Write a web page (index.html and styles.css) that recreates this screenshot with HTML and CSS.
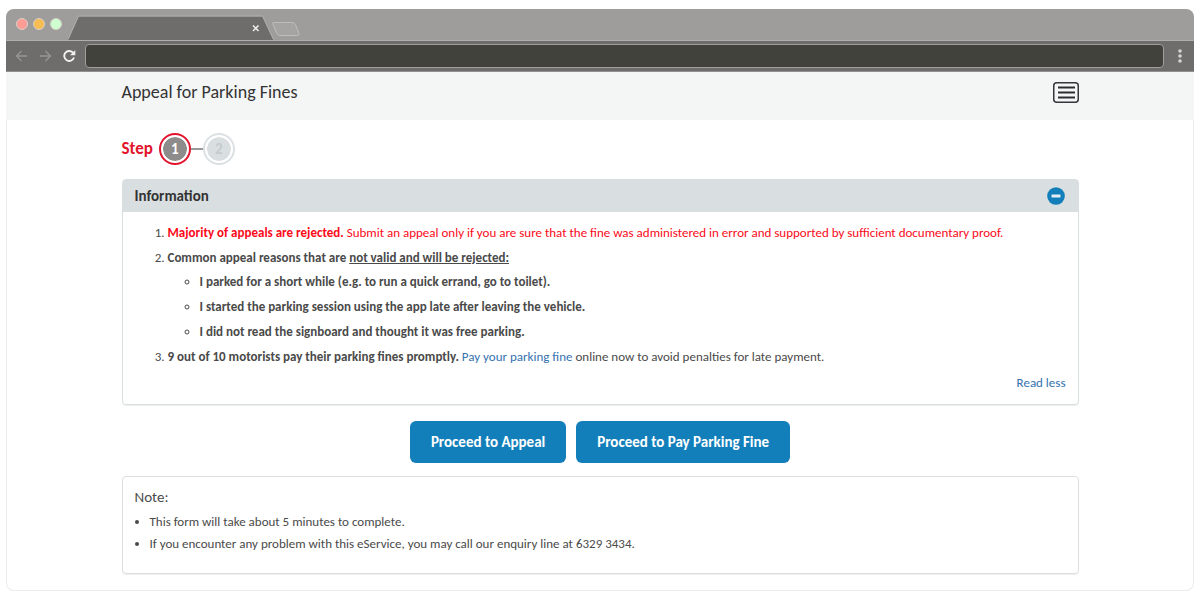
FILE: index.html
```html
<!DOCTYPE html>
<html lang="en">
<head>
<meta charset="utf-8">
<meta name="viewport" content="width=device-width, initial-scale=1">
<title>Appeal for Parking Fines</title>
<link rel="stylesheet" href="styles.css">
</head>
<body>
<div class="window">
  <div class="tabstrip">
    <div class="lights"><span class="light red"></span><span class="light amber"></span><span class="light green"></span></div>
    <svg class="tab" width="240" height="31" viewBox="0 0 240 31" aria-hidden="true">
      <path d="M0 31L10.500 7.500H194.500L205.500 31Z" fill="#6e6d6b"/>
      <path d="M0 30.500L10.500 7H194.500L205.500 30.500" fill="none" stroke="#b0afad"/>
      <path d="M185 16.500l5.500 5.500M190.500 16.500l-5.500 5.500" stroke="#f2f2f2" stroke-width="1.500"/>
      <path d="M205.500 13.500H224q2.500 0 3.500 2l3.500 9q.5 2-1.500 2H212q-2 0-3-2l-4-9q-1-2 .5-2Z" fill="#a5a4a2" stroke="#bebdbb"/>
    </svg>
  </div>
  <div class="toolbar">
    <button class="tool" aria-label="Back"><svg width="13" height="12" viewBox="0 0 13 12"><path d="M12 6H1.500M6.500 1L1.500 6l5 5" fill="none" stroke="#979694" stroke-width="1.300"/></svg></button>
    <button class="tool" aria-label="Forward"><svg width="13" height="12" viewBox="0 0 13 12"><path d="M1 6h10.500M6.500 1l5 5-5 5" fill="none" stroke="#979694" stroke-width="1.300"/></svg></button>
    <button class="tool" aria-label="Reload"><svg width="13" height="12" viewBox="0 0 13 12"><path d="M10.300 3A5 5 0 1 0 11 7.500" fill="none" stroke="#f0f0f0" stroke-width="1.900"/><path d="M12.300 0v5.300H7Z" fill="#f0f0f0"/></svg></button>
    <input class="address" type="text" aria-label="Address">
    <button class="tool" aria-label="Browser menu"><svg width="4" height="14" viewBox="0 0 4 14" fill="#d6d5d3"><circle cx="2" cy="2" r="1.800"/><circle cx="2" cy="7" r="1.800"/><circle cx="2" cy="12" r="1.800"/></svg></button>
  </div>
  <header class="header">
    <div class="container header-row">
      <h1 class="title">Appeal for Parking Fines</h1>
      <button class="menu" aria-label="Menu"><svg width="26" height="21" viewBox="0 0 26 21"><rect x=".75" y=".75" width="24.500" height="19.500" rx="3" fill="none" stroke="#33363a" stroke-width="1.500"/><path d="M5 5.500h17M5 10.500h17M5 15.500h17" stroke="#2b2e31" stroke-width="2.200"/></svg></button>
    </div>
  </header>
  <main class="container">
    <div class="steps">
      <span class="step-label">Step</span>
      <span class="step current">1</span>
      <span class="joint"></span>
      <span class="step">2</span>
    </div>
    <section class="panel">
      <div class="panel-head">
        <h2 class="panel-title">Information</h2>
        <button class="collapse" aria-label="Collapse information"><svg width="18" height="18" viewBox="0 0 18 18"><circle cx="9" cy="9" r="8.800" fill="#137fba"/><rect x="4.500" y="7.500" width="9" height="3" rx=".5" fill="#e4edf1"/></svg></button>
      </div>
      <div class="panel-body">
        <ol class="facts">
          <li class="alert"><strong>Majority of appeals are rejected.</strong> Submit an appeal only if you are sure that the fine was administered in error and supported by sufficient documentary proof.</li>
          <li><strong>Common appeal reasons that are <u>not valid and will be rejected:</u></strong>
            <ul class="reasons">
              <li><strong>I parked for a short while (e.g. to run a quick errand, go to toilet).</strong></li>
              <li><strong>I started the parking session using the app late after leaving the vehicle.</strong></li>
              <li><strong>I did not read the signboard and thought it was free parking.</strong></li>
            </ul>
          </li>
          <li><strong>9 out of 10 motorists pay their parking fines promptly.</strong> <a href="#pay">Pay your parking fine</a> online now to avoid penalties for late payment.</li>
        </ol>
        <a class="less" href="#less">Read less</a>
      </div>
    </section>
    <div class="actions">
      <button class="action">Proceed to Appeal</button>
      <button class="action">Proceed to Pay Parking Fine</button>
    </div>
    <section class="note">
      <h2 class="note-title">Note:</h2>
      <ul class="note-list">
        <li>This form will take about 5 minutes to complete.</li>
        <li>If you encounter any problem with this eService, you may call our enquiry line at 6329 3434.</li>
      </ul>
    </section>
  </main>
</div>
</body>
</html>
```
FILE: styles.css
```css
* { box-sizing: border-box; }
body {
  margin: 0;
  padding: 9px 6px 8px;
  background: #fff;
  color: #4a4a4a;
  font: 13px/24px Carlito, Lato, sans-serif;
}
button { padding: 0; border: 0; background: none; font: inherit; cursor: pointer; }
svg { display: block; }
a { color: #3572b0; text-decoration: none; }
h1, h2, ul, ol { margin: 0; padding: 0; }

.window { border-radius: 8px; box-shadow: inset 0 0 0 1px #ebebeb; overflow: hidden; }
.tabstrip { display: flex; height: 31px; background: #9f9d9b; }
.lights { display: flex; gap: 5px; padding: 9px 0 0 10px; }
.light { width: 12px; height: 12px; border: 1px solid #d8d0c8; border-radius: 50%; }
.red { background: #ff9c96; }
.amber { background: #f5bd52; }
.green { background: #ccffcd; }
.tab { margin-left: 6px; }
.toolbar {
  display: flex;
  align-items: center;
  gap: 11px;
  height: 32px;
  padding: 0 12px 0 9px;
  border-top: 1px solid #b0afad;
  border-bottom: 1px solid #93918f;
  background: #6e6d6b;
}
.address {
  flex: 1;
  min-width: 0;
  height: 24px;
  margin: 0 3px 0 -2px;
  padding: 0 8px;
  border: 1px solid #a09f9d;
  border-radius: 4px;
  background: #41423c;
  color: #fff;
}

.container { width: 957px; max-width: calc(100% - 32px); margin: 0 auto; }
.header { background: #f4f6f6; }
.header-row { display: flex; align-items: center; justify-content: space-between; padding: 8px 0 16px; }
.title { color: #333; font-size: 18px; font-weight: 400; line-height: 24px; }

.steps { display: flex; align-items: center; padding: 13px 0 14px; }
.step-label { margin-right: 6px; color: #e2142d; font-size: 17px; font-weight: 700; line-height: 24px; }
.step {
  width: 32px;
  height: 32px;
  padding: 2px;
  border: 2px solid #dbe0e3;
  border-radius: 50%;
  background: #d9dee1 content-box;
  box-shadow: inset 0 0 0 2px #fff;
  color: #c5cbce;
  font-size: 15px;
  font-weight: 900;
  line-height: 24px;
  text-align: center;
}
.current { border-color: #e2142d; background-color: #8e8b8b; color: #fff; }
.joint { width: 12px; height: 2px; background: #999; }

.panel { border: 1px solid #d9dee1; border-radius: 4px; box-shadow: 0 1px 1px #eee; }
.panel-head {
  display: flex;
  align-items: center;
  justify-content: space-between;
  padding: 4px 13px 4px 12px;
  background: #d9dee0;
}
.panel-title { color: #333; font-size: 15px; font-weight: 700; line-height: 24px; }
.panel-body { padding: 9px 12px; }
.facts { padding-left: 33px; }
.facts li + li { margin-top: 1px; }
.alert { color: #fb0a19; }
.alert::marker { color: #4a4a4a; }
.reasons { padding-left: 32px; list-style: circle; }
.less { display: block; width: fit-content; margin: 2px 0 0 auto; }

.actions { display: flex; flex-wrap: wrap; justify-content: center; gap: 10px; padding: 16px 0 13px; }
.action { padding: 9px 21px; border-radius: 6px; background: #137fba; color: #fff; font-size: 15px; font-weight: 700; line-height: 24px; }

.note { margin-bottom: 17px; padding: 8px 12px 18px; border: 1px solid #dcdfe0; border-radius: 4px; box-shadow: 0 1px 1px #eee; }
.note-title { font-size: 15px; font-weight: 400; line-height: 24px; }
.note-list { padding: 2px 0 0 15px; line-height: 22px; }
```
